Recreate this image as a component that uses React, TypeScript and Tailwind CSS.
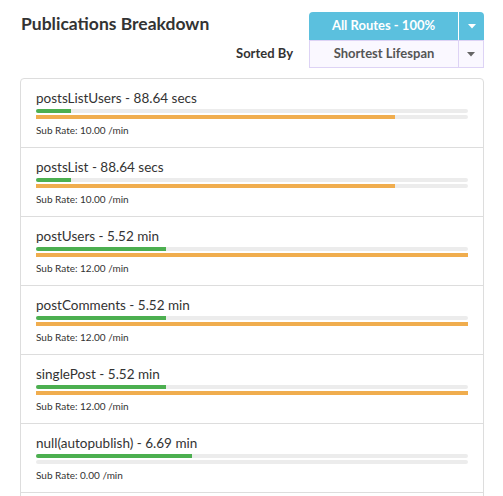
const ROWS = [
  { name: 'postsListUsers', time: '88.64 secs', green: 8, orange: 83, rate: '10.00' },
  { name: 'postsList', time: '88.64 secs', green: 8, orange: 83, rate: '10.00' },
  { name: 'postUsers', time: '5.52 min', green: 30, orange: 100, rate: '12.00' },
  { name: 'postComments', time: '5.52 min', green: 30, orange: 100, rate: '12.00' },
  { name: 'singlePost', time: '5.52 min', green: 30, orange: 100, rate: '12.00' },
  { name: 'null(autopublish)', time: '6.69 min', green: 36, orange: 0, rate: '0.00' },
]

function Caret() {
  return (
    <svg width="8" height="5" viewBox="0 0 8 5">
      <path d="M0 0 H8 L4 4.5 Z" fill="currentColor" />
    </svg>
  )
}

export default function App() {
  return (
    <div className="h-[496px] w-[503px] overflow-hidden bg-white font-['Lato',sans-serif] text-[#333]">
      {/* header */}
      <div className="flex items-start justify-between pl-[21px] pr-[19px] pt-[12px]">
        <h1 className="pt-[1px] text-[17.5px] font-bold leading-[22px] text-[#333]">Publications Breakdown</h1>
        <div className="flex flex-col items-end">
          <div className="flex h-[28px]">
            <div className="flex w-[149px] items-center justify-center rounded-tl-[4px] bg-[#5bc0de] text-[13px] font-bold text-white">
              All Routes - 100%
            </div>
            <div className="ml-px flex w-[25px] items-center justify-center rounded-tr-[4px] bg-[#5bc0de] text-white">
              <Caret />
            </div>
          </div>
          <div className="flex h-[28px] items-center">
            <span className="mr-[16px] text-[13px] font-bold text-[#333]">Sorted By</span>
            <div className="flex h-full w-[150px] items-center justify-center border border-[#ddd3f5] bg-[#faf8ff] text-[13px] font-bold text-[#555]">
              Shortest Lifespan
            </div>
            <div className="flex h-full w-[25px] items-center justify-center border border-l-0 border-[#ddd3f5] bg-[#faf8ff] text-[#666]">
              <Caret />
            </div>
          </div>
        </div>
      </div>

      {/* list */}
      <div className="ml-[20px] mr-[19px] mt-[10px] rounded-t-[4px] border border-[#dddddd]">
        {ROWS.map((r) => (
          <div key={r.name} className="h-[69px] border-b border-[#dddddd] px-[15px] pt-[10px]">
            <div className="text-[13.5px] leading-[19px] text-[#333]">
              {r.name} - {r.time}
            </div>
            <div className="mt-px h-[4px] rounded-full bg-[#ececec]">
              <div className="h-[4px] rounded-l-full bg-[#4caf50]" style={{ width: `${r.green}%` }} />
            </div>
            <div className="mt-[2px] h-[4px] rounded-full bg-[#ececec]">
              <div className="h-[4px] bg-[#f0ad4e]" style={{ width: `${r.orange}%` }} />
            </div>
            <div className="mt-[5px] text-[10px] leading-[12px] text-[#333]">Sub Rate: {r.rate} /min</div>
          </div>
        ))}
        <div className="h-[20px]" />
      </div>
    </div>
  )
}
